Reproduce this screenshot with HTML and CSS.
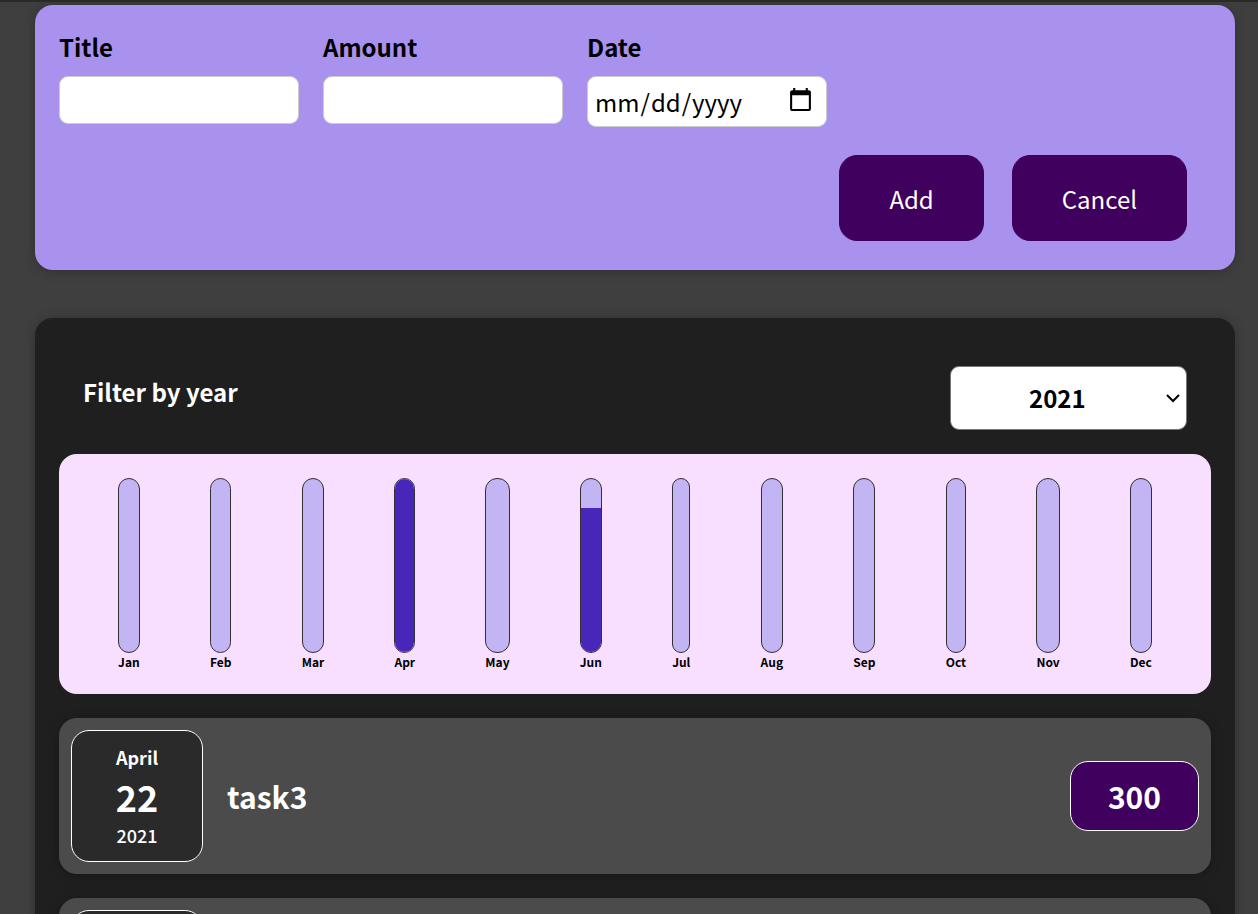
FILE: index.html
```
<!DOCTYPE html>
<html lang="en-US">
<head>
<meta charset="utf-8">
<title>Expenses</title>
<link rel="stylesheet" href="styles.css">
</head>
<body>
<main class="page">
  <form class="new-expense">
    <div class="controls">
      <div class="control"><label for="title">Title</label><input id="title" type="text"></div>
      <div class="control"><label for="amount">Amount</label><input id="amount" type="text" inputmode="decimal"></div>
      <div class="control"><label for="date">Date</label><input id="date" type="date"></div>
    </div>
    <div class="actions">
      <button type="submit">Add</button>
      <button type="button">Cancel</button>
    </div>
  </form>

  <section class="expenses">
    <div class="filter">
      <label for="year">Filter by year</label>
      <div class="select">
        <select id="year"><option>2022</option><option selected>2021</option><option>2020</option><option>2019</option></select>
        <svg class="chevron" viewBox="0 0 14 10" aria-hidden="true"><path d="M1 2l6 6 6-6" fill="none" stroke="#000" stroke-width="2"/></svg>
      </div>
    </div>
    <div class="chart">
      <div class="month"><div class="bar"><div class="fill" style="height:0%"></div></div><div class="name">Jan</div></div>
      <div class="month"><div class="bar"><div class="fill" style="height:0%"></div></div><div class="name">Feb</div></div>
      <div class="month"><div class="bar"><div class="fill" style="height:0%"></div></div><div class="name">Mar</div></div>
      <div class="month"><div class="bar"><div class="fill" style="height:100%"></div></div><div class="name">Apr</div></div>
      <div class="month"><div class="bar"><div class="fill" style="height:0%"></div></div><div class="name">May</div></div>
      <div class="month"><div class="bar"><div class="fill" style="height:83%"></div></div><div class="name">Jun</div></div>
      <div class="month"><div class="bar"><div class="fill" style="height:0%"></div></div><div class="name">Jul</div></div>
      <div class="month"><div class="bar"><div class="fill" style="height:0%"></div></div><div class="name">Aug</div></div>
      <div class="month"><div class="bar"><div class="fill" style="height:0%"></div></div><div class="name">Sep</div></div>
      <div class="month"><div class="bar"><div class="fill" style="height:0%"></div></div><div class="name">Oct</div></div>
      <div class="month"><div class="bar"><div class="fill" style="height:0%"></div></div><div class="name">Nov</div></div>
      <div class="month"><div class="bar"><div class="fill" style="height:0%"></div></div><div class="name">Dec</div></div>
    </div>
    <ul class="list">
      <li class="item">
        <div class="date"><div class="date-month">April</div><div class="date-day">22</div><div class="date-year">2021</div></div>
        <h2>task3</h2>
        <div class="price">300</div>
      </li>
      <li class="item">
        <div class="date"></div>
      </li>
    </ul>
  </section>
</main>
</body>
</html>
```
FILE: styles.css
```
* { box-sizing: border-box; }

body {
  margin: 0;
  height: 100vh;
  overflow: hidden;
  background: #3f3f3f;
  border-top: 2px solid #292929;
  font: 24px/35px "Noto Sans CJK JP", "Noto Sans", sans-serif;
}

input, select, button { font: inherit; }

.page { padding: 3px 23px 0 35px; }

.new-expense {
  margin-bottom: 48px;
  padding: 24px 24px 29px;
  background: #a892ee;
  border-radius: 18px;
  box-shadow: 0 1px 12px rgba(0, 0, 0, .25);
}

.controls { display: flex; flex-wrap: wrap; align-items: flex-start; gap: 24px; }
.control { width: 240px; }
.control label { display: block; margin-bottom: 12px; font-weight: bold; }
.control input {
  display: block;
  width: 100%;
  height: 48px;
  padding: 6px;
  border: 1px solid #ccc;
  border-radius: 9px;
  background: #fff;
}
.control input[type="date"] { height: 51px; }
.control input::-webkit-calendar-picker-indicator {
  width: 27px;
  height: 27px;
  margin-right: 4px;
  margin-bottom: 2px;
}

.actions { display: flex; justify-content: flex-end; gap: 28px; margin-top: 28px; padding-right: 24px; }
.actions button {
  padding: 24px 49px;
  min-height: 86px;
  border: 1px solid #40005d;
  border-radius: 18px;
  background: #40005d;
  color: #fff;
}

.expenses {
  padding: 24px;
  background: #1f1f1f;
  border-radius: 18px;
  box-shadow: 0 1px 12px rgba(0, 0, 0, .25);
}

.filter {
  display: flex;
  justify-content: space-between;
  padding: 24px;
  color: #fff;
  font-weight: bold;
}
.filter label { padding-top: 8px; }
.select { position: relative; }
.select select {
  display: block;
  appearance: none;
  width: 237px;
  height: 64px;
  padding: 12px 72px 14px 78px;
  border: 1px solid #767676;
  border-radius: 9px;
  background: #fff;
  color: #000;
  font-weight: bold;
}
.chevron {
  position: absolute;
  right: 7px;
  top: 27px;
  width: 14px;
  height: 10px;
  pointer-events: none;
}

.chart {
  display: flex;
  justify-content: space-around;
  height: 240px;
  padding: 24px;
  border-radius: 18px;
  background: #f8dfff;
}
.month { display: flex; flex-direction: column; align-items: center; }
.bar {
  display: flex;
  flex: 1;
  flex-direction: column;
  justify-content: flex-end;
  width: 100%;
  overflow: hidden;
  border: 1px solid #313131;
  border-radius: 12px;
  background: #c3b4f3;
}
.fill { background: #4826b9; }
.name { font-size: 12px; line-height: 17px; font-weight: bold; }

.list { margin: 24px 0 0; padding: 0; list-style: none; }
.item {
  display: flex;
  align-items: center;
  gap: 24px;
  margin-bottom: 24px;
  padding: 12px;
  border-radius: 18px;
  background: #4b4b4b;
  color: #fff;
  box-shadow: 0 2px 12px rgba(0, 0, 0, .25);
}
.date {
  display: flex;
  flex-direction: column;
  align-items: center;
  justify-content: center;
  width: 132px;
  height: 132px;
  border: 1px solid #fff;
  border-radius: 18px;
  background: #2a2a2a;
}
.date-month, .date-year { font-size: 18px; line-height: 26px; }
.date-month { font-weight: bold; }
.date-day { font-size: 36px; line-height: 52px; font-weight: bold; }
.date-year { font-weight: 500; }
.item h2 { flex: 1; margin: 0; font-size: 30px; line-height: 44px; }
.price {
  padding: 12px 37px;
  border: 1px solid #fff;
  border-radius: 18px;
  background: #40005d;
  font-size: 30px;
  line-height: 44px;
  font-weight: bold;
}
```
